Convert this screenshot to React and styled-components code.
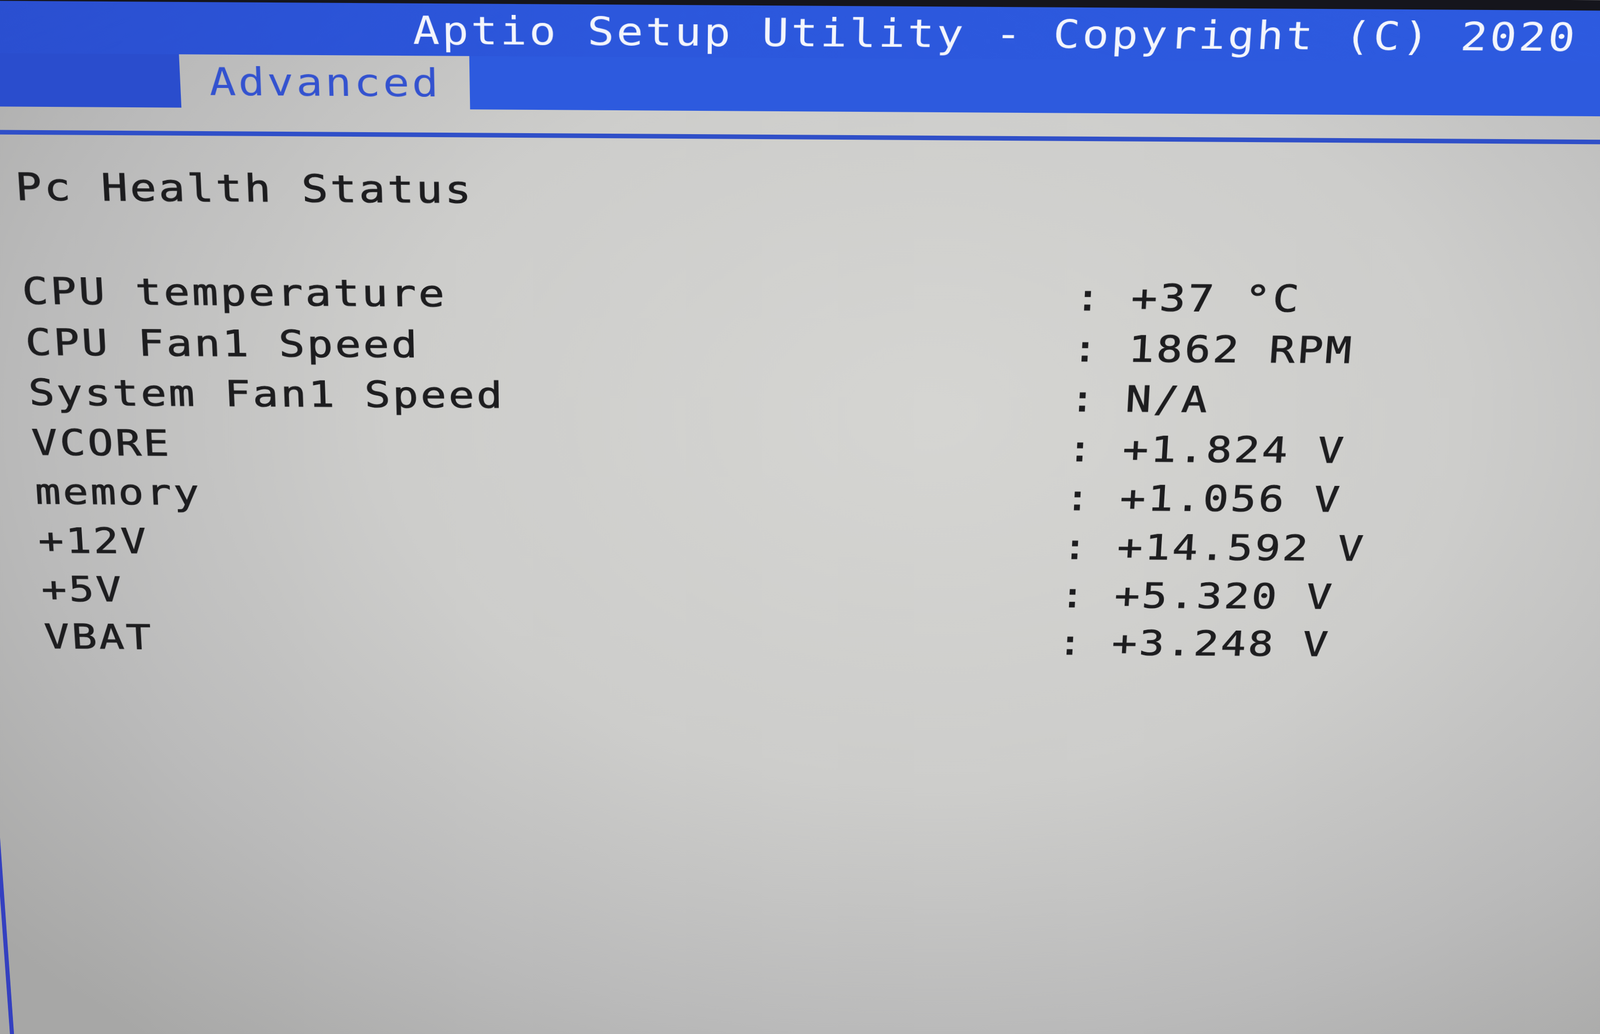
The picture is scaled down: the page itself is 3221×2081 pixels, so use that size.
import React from 'react';
import styled, { createGlobalStyle } from 'styled-components';

// Photo of a monitor: the flat BIOS screen is tilted back with a perspective transform
const GlobalStyle = createGlobalStyle`
  html, body {
    margin: 0;
    padding: 0;
    background: #b9b9b7;
    overflow: hidden;
  }
`;

const Viewport = styled.div`
  width: 3221px;
  height: 2081px;
  overflow: hidden;
  background: radial-gradient(
    ellipse 75% 80% at 58% 40%,
    #d5d5d2 0%,
    #cdcdcb 45%,
    #bababa 75%,
    #a7a7a6 100%
  );
`;

const Screen = styled.div`
  width: 3821px;
  min-height: 2600px;
  margin-left: -300px;
  display: flex;
  flex-direction: column;
  transform-origin: 1654px 585px;
  transform: rotate(0.35deg) perspective(3000px) rotateX(-9.2deg);
  filter: blur(0.6px);
  font-family: "DejaVu Sans Mono", "Liberation Mono", monospace;
  font-size: 75px;
  white-space: pre;
`;

// BIOS font is wider than DejaVu: stretch each run of text, keep a 57px cell
const Glyphs = styled.span`
  display: inline-block;
  letter-spacing: 3.99px;
  transform: scaleX(1.16);
  transform-origin: 0 50%;
`;

const Bezel = styled.div`
  height: 20px;
  background: #15151c;
`;

// Header
const TitleBar = styled.div`
  background: linear-gradient(90deg, #2a4dcd 0%, #2c57dc 40%, #2d5be0 100%);
  padding: 15px 0 11px 1142px;
  line-height: 75px;
  color: #f3f5fc;
`;

const TabRow = styled.div`
  display: flex;
  height: 104px;
`;

const BlueFill = styled.div`
  background: ${(p) => (p.$right ? '#2d5ade' : '#2a4dcd')};
  width: ${(p) => (p.$right ? 'auto' : '682px')};
  flex: ${(p) => (p.$right ? '1' : 'none')};
`;

const Tab = styled.div`
  width: 513px;
  padding: 16px 0 13px 57px;
  line-height: 75px;
  color: #3352cf;
`;

// Content panel
const Panel = styled.div`
  margin: 46px 0 0 212px;
  border-top: 9px solid #2f4fc8;
  border-left: 9px solid #3440c0;
  padding: 52px 0 0 123px;
  flex: 1;
  color: #1d1d1f;
  -webkit-text-stroke: 1.2px #1d1d1f;
`;

const Heading = styled.div`
  line-height: 104px;
`;

const List = styled.div`
  margin-top: 106px;
  display: flex;
  flex-direction: column;
`;

const Row = styled.div`
  display: grid;
  grid-template-columns: 2120px 114px auto;
  line-height: 104.6px;
`;

const readings = [
  ['CPU temperature', '+37 °C'],
  ['CPU Fan1 Speed', '1862 RPM'],
  ['System Fan1 Speed', 'N/A'],
  ['VCORE', '+1.824 V'],
  ['memory', '+1.056 V'],
  ['+12V', '+14.592 V'],
  ['+5V', '+5.320 V'],
  ['VBAT', '+3.248 V'],
];

export default function App() {
  return (
    <>
      <GlobalStyle />
      <Viewport>
        <Screen>
          <Bezel />
          <TitleBar>
            <Glyphs>Aptio Setup Utility - Copyright (C) 2020</Glyphs>
          </TitleBar>
          <TabRow>
            <BlueFill />
            <Tab>
              <Glyphs>Advanced</Glyphs>
            </Tab>
            <BlueFill $right />
          </TabRow>
          <Panel>
            <Heading>
              <Glyphs>Pc Health Status</Glyphs>
            </Heading>
            <List>
              {readings.map(([label, value]) => (
                <Row key={label}>
                  <Glyphs>{label}</Glyphs>
                  <Glyphs>:</Glyphs>
                  <Glyphs>{value}</Glyphs>
                </Row>
              ))}
            </List>
          </Panel>
        </Screen>
      </Viewport>
    </>
  );
}
